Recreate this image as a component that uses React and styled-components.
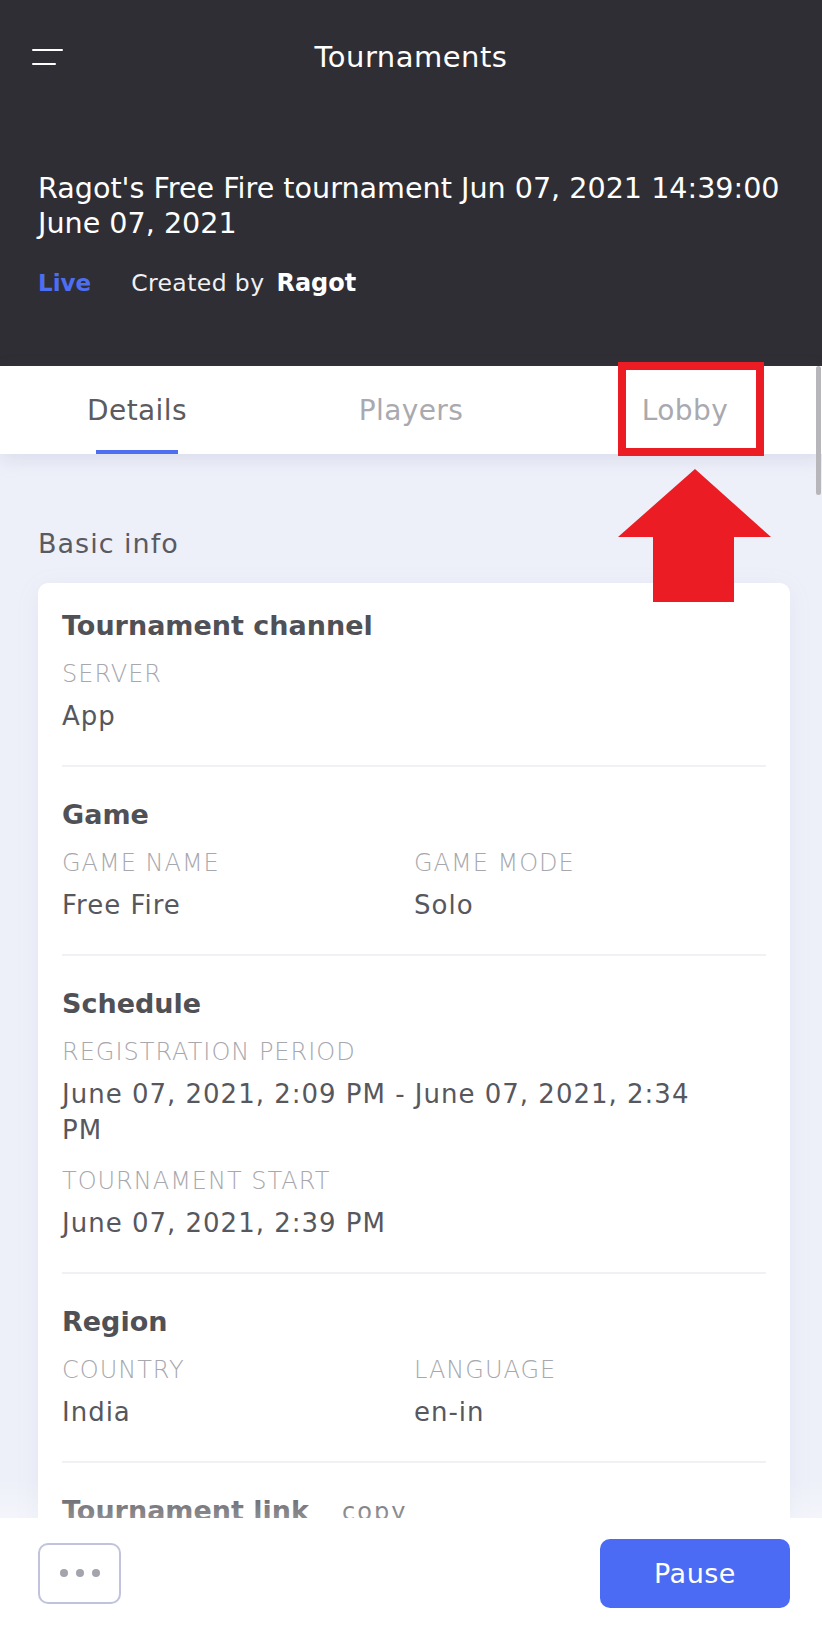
import React from "react";
import styled, { createGlobalStyle } from "styled-components";

const GlobalStyle = createGlobalStyle`
  html, body {
    margin: 0;
    padding: 0;
    height: 100%;
    overflow: hidden;
    background: #eef0f9;
  }
  body {
    font-family: "DejaVu Sans", "Noto Sans", sans-serif;
    -webkit-font-smoothing: antialiased;
  }
  * { box-sizing: border-box; }
`;

const Page = styled.div`
  position: relative;
  height: 1628px;
  overflow: hidden;
  background: #eef0f9;
`;

const Header = styled.header`
  background: #2f2e34;
  color: #fff;
  padding: 0 28px 68px 38px;
`;

const TopBar = styled.div`
  display: grid;
  grid-template-columns: 1fr auto 1fr;
  align-items: center;
  height: 114px;
  margin: 0 -28px 0 -38px;
`;

const Burger = styled.div`
  display: flex;
  flex-direction: column;
  gap: 12px;
  width: 31px;
  margin-left: 32px;
`;

const BurgerLine = styled.span`
  display: block;
  height: 2px;
  border-radius: 1px;
  background: #fff;
  width: ${(p) => p.$w}px;
`;

const ScreenTitle = styled.h1`
  margin: 0;
  font-size: 29px;
  font-weight: 400;
  letter-spacing: 0.5px;
  color: #fff;
`;

const EventTitle = styled.h2`
  margin: 57px 0 0;
  font-size: 28.6px;
  line-height: 35px;
  font-weight: 400;
  color: #fff;
`;

const Meta = styled.div`
  display: flex;
  align-items: center;
  margin-top: 27px;
  height: 30px;
  font-size: 23.5px;
`;

const LiveTag = styled.span`
  color: #4e6ef2;
  font-weight: 700;
  margin-right: 40px;
  font-size: 23px;
`;

const CreatedBy = styled.span`
  color: #f1f1f3;
  font-weight: 400;
  letter-spacing: 0.4px;
`;

const Creator = styled.strong`
  color: #fff;
  font-weight: 700;
  margin-left: 12px;
  font-size: 24px;
`;

const Tabs = styled.nav`
  position: relative;
  z-index: 2;
  display: grid;
  grid-template-columns: repeat(3, 1fr);
  height: 88px;
  background: #fff;
  box-shadow: 0 6px 18px rgba(120, 125, 170, 0.16);
`;

const Tab = styled.div`
  position: relative;
  display: flex;
  align-items: center;
  justify-content: center;
  font-size: 28px;
  letter-spacing: 0.4px;
  color: ${(p) => (p.$active ? "#5b5b60" : "#a9a9b0")};

  &::after {
    content: "";
    display: ${(p) => (p.$active ? "block" : "none")};
    position: absolute;
    bottom: 0;
    left: 50%;
    width: 82px;
    height: 4px;
    margin-left: -41px;
    background: #4e6ef2;
  }
`;

const Content = styled.main`
  padding: 72px 32px 0 38px;
`;

const SectionHeading = styled.h3`
  margin: 0 0 21px;
  font-size: 27px;
  line-height: 36px;
  font-weight: 400;
  letter-spacing: 1px;
  color: #5a5a62;
`;

const Card = styled.div`
  background: #fff;
  border-radius: 10px;
  padding: 0 24px;
  box-shadow: 0 4px 24px rgba(100, 110, 170, 0.08);
`;

const Section = styled.section`
  padding: 31px 0 31px;
  border-bottom: 2px solid #f0f0f5;

  &:first-child {
    padding-top: 26px;
  }
`;

const TitleRow = styled.div`
  display: flex;
  align-items: baseline;
  gap: 33px;
`;

const GroupTitle = styled.h4`
  margin: 0;
  font-size: 27px;
  line-height: 34px;
  font-weight: 700;
  color: #505057;
`;

const CopyLink = styled.span`
  font-size: 24px;
  letter-spacing: 2px;
  color: #5a5a62;
`;

const Fields = styled.div`
  display: grid;
  grid-template-columns: ${(p) => (p.$cols === 2 ? "1fr 1fr" : "1fr")};
  row-gap: 18px;
  margin-top: 16px;
`;

const Field = styled.div`
  display: flex;
  flex-direction: column;
`;

const Label = styled.div`
  font-size: 24px;
  line-height: 30px;
  font-weight: 300;
  letter-spacing: 1px;
  text-transform: uppercase;
  color: #a7a7ad;
`;

const Value = styled.div`
  margin-top: 9px;
  padding-right: 40px;
  font-size: 26px;
  line-height: 36px;
  letter-spacing: 1px;
  color: #57575e;
`;

const BottomBar = styled.footer`
  position: absolute;
  left: 0;
  right: 0;
  bottom: 0;
  z-index: 3;
  height: 110px;
  display: flex;
  align-items: center;
  justify-content: space-between;
  padding: 0 32px 0 38px;
  background: #fff;

  &::before {
    content: "";
    position: absolute;
    left: 0;
    right: 0;
    bottom: 100%;
    height: 40px;
    background: linear-gradient(rgba(255, 255, 255, 0), rgba(255, 255, 255, 0.35));
    pointer-events: none;
  }
`;

const MoreButton = styled.button`
  display: flex;
  align-items: center;
  justify-content: center;
  gap: 8px;
  width: 83px;
  height: 61px;
  padding: 0;
  background: #fff;
  border: 2px solid #c0c3dc;
  border-radius: 10px;
`;

const Dot = styled.span`
  width: 8px;
  height: 8px;
  border-radius: 50%;
  background: #a3a4ac;
`;

const PauseButton = styled.button`
  width: 190px;
  height: 69px;
  border: none;
  border-radius: 10px;
  background: #4b6bf5;
  color: #fff;
  font-family: inherit;
  font-size: 27px;
  letter-spacing: 0.5px;
`;

const Highlight = styled.div`
  position: absolute;
  left: 618px;
  top: 362px;
  width: 146px;
  height: 94px;
  border: 8px solid #ec1c24;
  z-index: 4;
`;

const ArrowSvg = styled.svg`
  position: absolute;
  left: 618px;
  top: 469px;
  z-index: 4;
`;

const ScrollThumb = styled.div`
  position: absolute;
  right: 1px;
  top: 366px;
  width: 5px;
  height: 129px;
  border-radius: 3px;
  background: #b6b6bb;
  z-index: 5;
`;

const sections = [
  { title: "Tournament channel", cols: 1, fields: [["Server", "App"]] },
  {
    title: "Game",
    cols: 2,
    fields: [
      ["Game name", "Free Fire"],
      ["Game mode", "Solo"],
    ],
  },
  {
    title: "Schedule",
    cols: 1,
    fields: [
      ["Registration period", "June 07, 2021, 2:09 PM - June 07, 2021, 2:34 PM"],
      ["Tournament start", "June 07, 2021, 2:39 PM"],
    ],
  },
  {
    title: "Region",
    cols: 2,
    fields: [
      ["Country", "India"],
      ["Language", "en-in"],
    ],
  },
];

export default function App() {
  return (
    <Page>
      <GlobalStyle />
      <Header>
        <TopBar>
          <Burger>
            <BurgerLine $w={31} />
            <BurgerLine $w={24} />
          </Burger>
          <ScreenTitle>Tournaments</ScreenTitle>
          <span />
        </TopBar>
        <EventTitle>Ragot's Free Fire tournament Jun 07, 2021 14:39:00 June 07, 2021</EventTitle>
        <Meta>
          <LiveTag>Live</LiveTag>
          <CreatedBy>Created by</CreatedBy>
          <Creator>Ragot</Creator>
        </Meta>
      </Header>

      <Tabs>
        <Tab $active>Details</Tab>
        <Tab>Players</Tab>
        <Tab>Lobby</Tab>
      </Tabs>

      <Content>
        <SectionHeading>Basic info</SectionHeading>
        <Card>
          {sections.map((s) => (
            <Section key={s.title}>
              <GroupTitle>{s.title}</GroupTitle>
              <Fields $cols={s.cols}>
                {s.fields.map(([label, value]) => (
                  <Field key={label}>
                    <Label>{label}</Label>
                    <Value>{value}</Value>
                  </Field>
                ))}
              </Fields>
            </Section>
          ))}
          <Section>
            <TitleRow>
              <GroupTitle>Tournament link</GroupTitle>
              <CopyLink>copy</CopyLink>
            </TitleRow>
          </Section>
        </Card>
      </Content>

      <Highlight />
      <ArrowSvg width="153" height="133" viewBox="0 0 153 133">
        <path d="M77 0 L153 68 L116 68 L116 133 L35 133 L35 68 L0 68 Z" fill="#ec1c24" />
      </ArrowSvg>

      <BottomBar>
        <MoreButton aria-label="More">
          <Dot />
          <Dot />
          <Dot />
        </MoreButton>
        <PauseButton>Pause</PauseButton>
      </BottomBar>
      <ScrollThumb />
    </Page>
  );
}
